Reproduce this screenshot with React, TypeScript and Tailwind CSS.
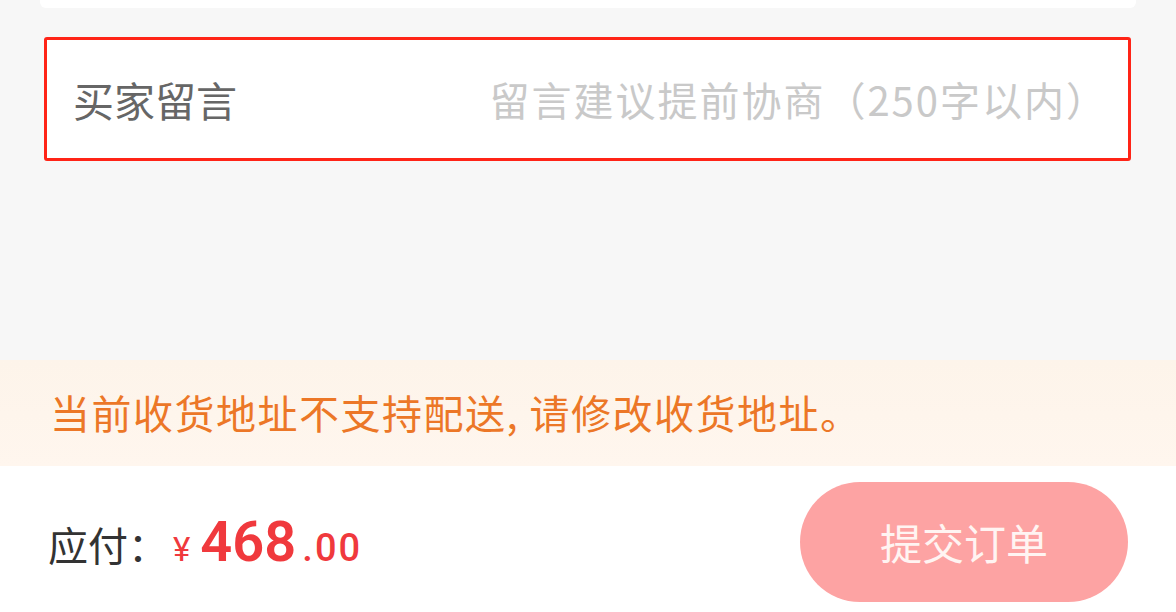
import React from "react";

const cjk = { fontFamily: '"Noto Sans CJK SC", "Noto Sans", sans-serif' };
const num = { fontFamily: 'Roboto, "Noto Sans", sans-serif' };

export default function App() {
  return (
    <div className="w-[1176px] h-[612px] overflow-hidden bg-[#f7f7f7] flex flex-col" style={cjk}>
      <div className="mx-[40px] h-[8px] shrink-0 bg-white rounded-b-[6px]" />
      <div className="mt-[29px] ml-[44px] w-[1087px] h-[124px] shrink-0 border-[3px] border-[#ff2417] rounded-[3px] bg-white flex items-center justify-between pl-[26px] pr-[20px]">
        <span className="text-[41px] leading-none text-[#666666]">买家留言</span>
        <span className="text-[40px] leading-none text-[#c9c9c9] tracking-[2px]">留言建议提前协商（250字以内）</span>
      </div>
      <div className="h-[199px] shrink-0" />
      <div className="h-[106px] shrink-0 bg-gradient-to-b from-[#fdf4ea] to-[#fff6ee] flex items-center pl-[50px] pb-[2px]">
        <span className="text-[40px] leading-none text-[#ec7727] tracking-[1.5px]">当前收货地址不支持配送, 请修改收货地址。</span>
      </div>
      <div className="flex-1 bg-white flex items-center justify-between pl-[48px] pr-[48px] pt-[6px]">
        <div className="flex items-baseline">
          <span className="text-[40px] leading-none text-[#333333]">应付：</span>
          <span className="ml-[5px] text-[33px] leading-none text-[#f0393d]" style={num}>¥</span>
          <span className="ml-[10px] text-[56px] leading-none font-semibold text-[#f0393d]" style={num}>468</span>
          <span className="ml-[6px] text-[38px] leading-none font-medium text-[#f0393d] tracking-[2px]" style={num}>.00</span>
        </div>
        <div className="w-[328px] h-[120px] rounded-full bg-[#fda3a3] flex items-center justify-center">
          <span className="text-[42px] leading-none text-[#fff4f2]">提交订单</span>
        </div>
      </div>
    </div>
  );
}
